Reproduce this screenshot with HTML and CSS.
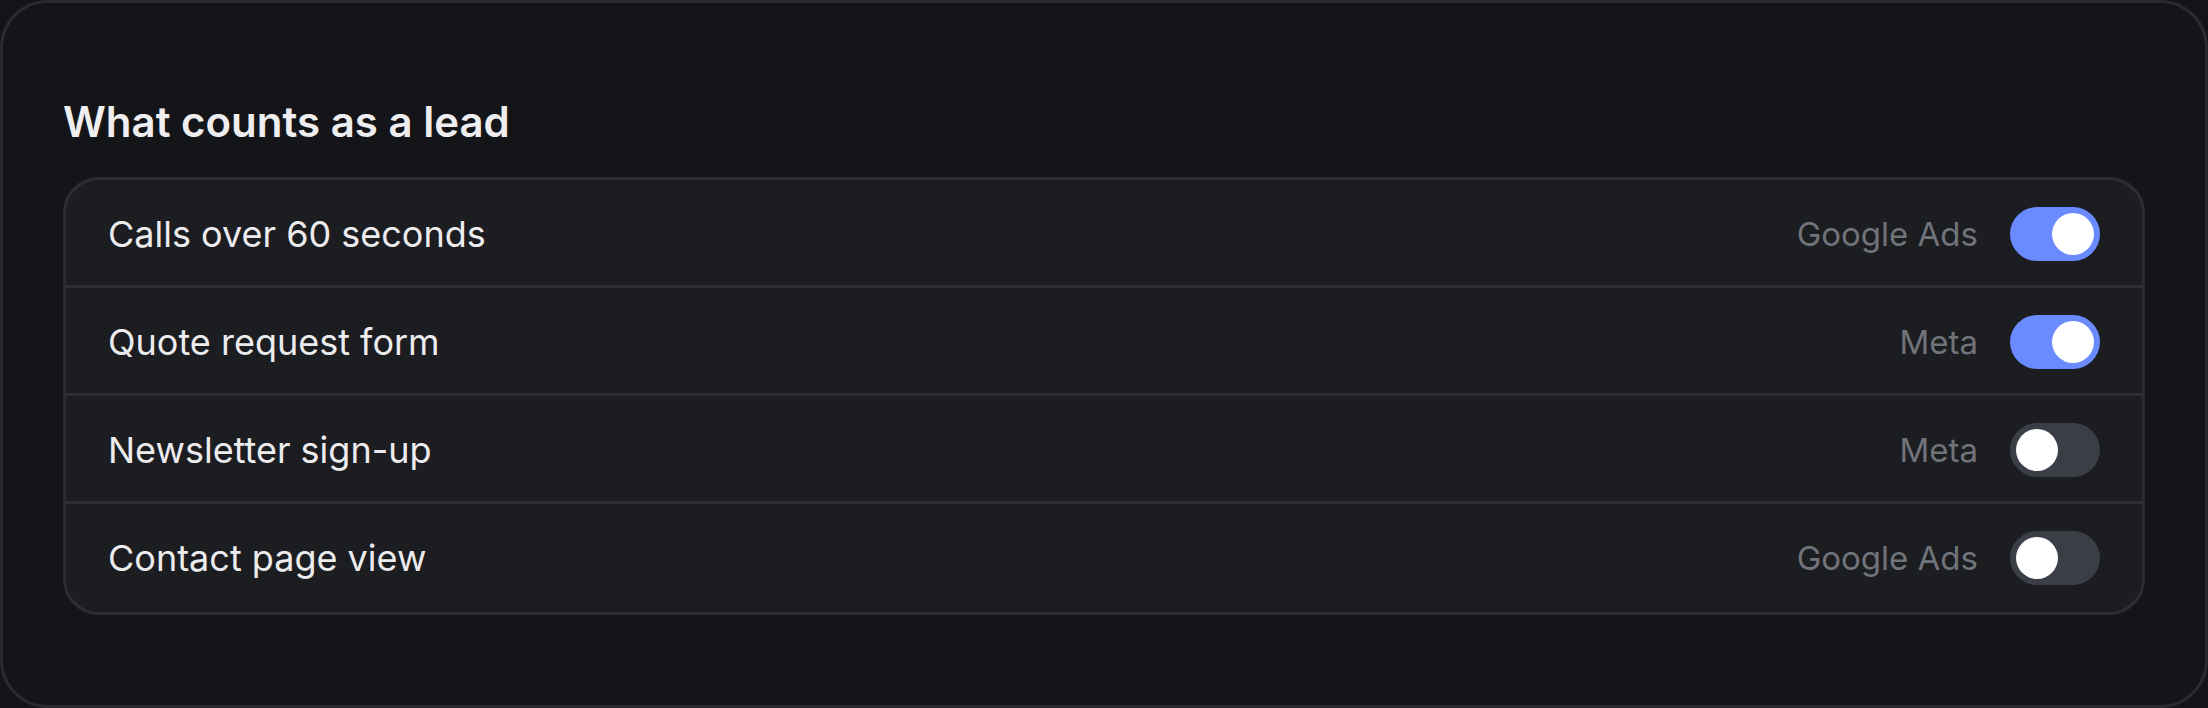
FILE: index.html
```html
<!DOCTYPE html>
<html lang="en">
<head>
<meta charset="utf-8">
<title>What counts as a lead</title>
<link rel="stylesheet" href="styles.css">
</head>
<body>
<section class="panel">
  <h2 class="title">What counts as a lead</h2>
  <ul class="list">
    <li class="row">
      <span class="name">Calls over 60 seconds</span>
      <span class="meta">
        <span class="source">Google Ads</span>
        <span class="toggle on"><span class="knob"></span></span>
      </span>
    </li>
    <li class="row">
      <span class="name">Quote request form</span>
      <span class="meta">
        <span class="source">Meta</span>
        <span class="toggle on"><span class="knob"></span></span>
      </span>
    </li>
    <li class="row">
      <span class="name">Newsletter sign-up</span>
      <span class="meta">
        <span class="source">Meta</span>
        <span class="toggle"><span class="knob"></span></span>
      </span>
    </li>
    <li class="row">
      <span class="name">Contact page view</span>
      <span class="meta">
        <span class="source">Google Ads</span>
        <span class="toggle"><span class="knob"></span></span>
      </span>
    </li>
  </ul>
</section>
</body>
</html>
```

FILE: styles.css
```css
* { box-sizing: border-box; }

html, body {
  margin: 0;
  padding: 0;
  background: #141518;
}

body {
  font-family: Inter, "Noto Sans", "Liberation Sans", sans-serif;
  width: 2208px;
  height: 708px;
}

.panel {
  width: 2208px;
  height: 708px;
  background: #141518;
  border: 3px solid #2a2b30;
  border-radius: 48px;
  padding: 94px 60px 0 60px;
  display: flex;
  flex-direction: column;
}

.title {
  margin: 0 0 30px 0;
  font-size: 42px;
  line-height: 50px;
  font-weight: 600;
  color: #eeeef0;
}

.list {
  list-style: none;
  margin: 0;
  padding: 0 0 3px 0;
  background: #1c1d21;
  border: 3px solid #2c2d33;
  border-radius: 36px;
  overflow: hidden;
}

.row {
  height: 105px;
  display: flex;
  align-items: center;
  justify-content: space-between;
  padding: 2px 42px 0 42px;
}

.row + .row {
  border-top: 3px solid #2c2d33;
  height: 108px;
}

.name {
  font-size: 36px;
  color: #ececee;
  font-weight: 400;
}

.meta {
  display: flex;
  align-items: center;
  gap: 32px;
}

.source {
  font-size: 33px;
  color: #71737b;
}

.toggle {
  width: 90px;
  height: 54px;
  border-radius: 27px;
  background: #3b3e46;
  padding: 6px;
  display: flex;
  justify-content: flex-start;
}

.toggle.on {
  background: #6a8bff;
  justify-content: flex-end;
}

.knob {
  width: 42px;
  height: 42px;
  border-radius: 50%;
  background: #ffffff;
}
```
